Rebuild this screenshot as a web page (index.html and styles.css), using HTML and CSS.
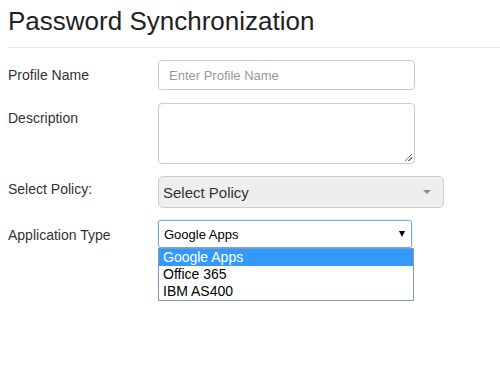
FILE: index.html
```html
<!DOCTYPE html>
<html>
<head>
<meta charset="utf-8">
<link rel="stylesheet" href="styles.css">
</head>
<body>
<div class="page">
  <h1 class="title">Password Synchronization</h1>
  <div class="form">
    <div class="row row-name">
      <label class="label">Profile Name</label>
      <div class="field"><div class="input placeholder">Enter Profile Name</div></div>
    </div>
    <div class="row row-desc">
      <label class="label">Description</label>
      <div class="field"><div class="textarea"><span class="grip"></span></div></div>
    </div>
    <div class="row row-policy">
      <label class="label">Select Policy:</label>
      <div class="field"><div class="policy"><span>Select Policy</span><span class="caret-grey"></span></div></div>
    </div>
    <div class="row row-app">
      <label class="label">Application Type</label>
      <div class="field">
        <div class="appselect"><span>Google Apps</span><span class="caret-black"></span></div>
        <div class="options">
          <div class="opt active">Google Apps</div>
          <div class="opt">Office 365</div>
          <div class="opt">IBM AS400</div>
        </div>
      </div>
    </div>
  </div>
</div>
</body>
</html>
```
FILE: styles.css
```css
* { box-sizing: border-box; }
html, body { margin: 0; padding: 0; background: #fff; }
body { font-family: "Liberation Sans", Arial, sans-serif; color: #333; }
.page { padding: 0 0 0 8px; }
.title {
  margin: 0;
  padding: 4px 0 0 0;
  height: 48px;
  font-weight: normal;
  font-size: 26px;
  line-height: 34px;
  color: #222;
  border-bottom: 1px solid #e8e8e8;
}
.form { display: flex; flex-direction: column; padding-top: 12px; }
.row { display: flex; }
.label { width: 150px; font-size: 14px; color: #333; line-height: 20px; padding-top: 5px; }
.field { display: flex; flex-direction: column; }
.row-desc { margin-top: 13px; }
.row-policy { margin-top: 12px; }
.row-app { margin-top: 12px; }
.row-policy .label { padding-top: 3px; }
.row-app .label { padding-top: 5px; }
.input {
  width: 257px; height: 30px;
  border: 1px solid #ccc; border-radius: 4px;
  padding: 7px 10px; font-size: 13px; line-height: 16px;
}
.placeholder { color: #999; }
.textarea {
  position: relative;
  width: 257px; height: 61px;
  border: 1px solid #ccc; border-radius: 4px;
}
.grip {
  position: absolute; right: 2px; bottom: 2px;
  width: 7px; height: 7px;
  background: linear-gradient(135deg, transparent 45%, #777 45%, #777 55%, transparent 55%, transparent 70%, #777 70%, #777 80%, transparent 80%);
}
.policy {
  width: 286px; height: 32px;
  border: 1px solid #ccc; border-radius: 5px;
  background: #eee;
  display: flex; align-items: center; justify-content: space-between;
  padding: 0 12px 0 4px;
  font-size: 15px; color: #333;
}
.caret-grey {
  width: 0; height: 0;
  border-left: 4px solid transparent; border-right: 4px solid transparent;
  border-top: 4px solid #888;
}
.appselect {
  width: 254px; height: 28px;
  border: 1px solid #7aa7e0; border-radius: 3px;
  box-shadow: 0 0 2px rgba(102,175,233,0.6);
  display: flex; align-items: center; justify-content: space-between;
  padding: 0 6px 0 5px;
  font-size: 13px; color: #000;
}
.caret-black {
  width: 0; height: 0;
  border-left: 3.5px solid transparent; border-right: 3.5px solid transparent;
  border-top: 6px solid #000;
}
.options {
  width: 256px;
  border: 1px solid #7f9db9;
  background: #fff;
  font-size: 14px; color: #000;
}
.opt { height: 17px; line-height: 17px; padding-left: 4px; }
.opt.active { background: #3399ff; color: #fff; }
```
